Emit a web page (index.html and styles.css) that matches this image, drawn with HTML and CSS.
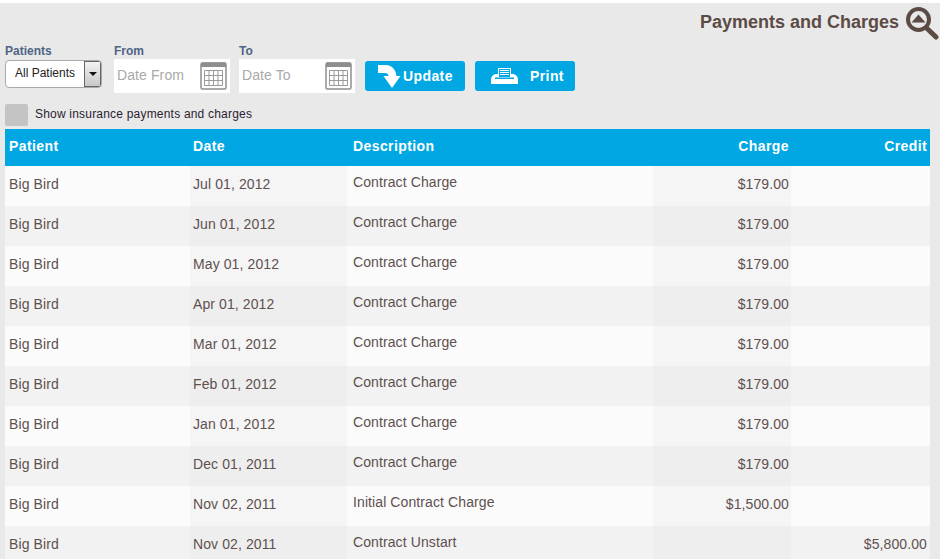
FILE: index.html
```html
<!DOCTYPE html>
<html lang="en">
<head>
<meta charset="utf-8">
<title>Payments and Charges</title>
<link rel="stylesheet" href="styles.css">
</head>
<body>
<main class="panel">
  <header class="title-row">
    <h1 class="title">Payments and Charges</h1>
    <svg class="search-icon" width="34" height="34" viewBox="0 0 34 34" aria-hidden="true">
      <circle cx="13.5" cy="13.5" r="10.5" fill="none" stroke="#5b4b44" stroke-width="4"/>
      <path d="M21.5 22 L31 31" stroke="#5b4b44" stroke-width="5" stroke-linecap="round"/>
      <path d="M6.5 16.5 L13.5 8.500 L20.5 16.5 Z" fill="#5b4b44"/>
    </svg>
  </header>

  <form class="filters">
    <div class="field field-patients">
      <label class="field-label">Patients</label>
      <div class="select">
        <span class="select-value">All Patients</span>
        <span class="select-arrow"><i class="caret"></i></span>
      </div>
    </div>
    <div class="field">
      <label class="field-label">From</label>
      <div class="date-input">
        <span class="placeholder">Date From</span>
        <svg class="calendar" width="27" height="28" viewBox="0 0 27 28" aria-hidden="true">
          <rect x="1" y="1" width="25" height="26" rx="1.5" fill="#fff" stroke="#8e8e8e" stroke-width="1.5"/>
          <path d="M1 1.5 a1 1 0 0 1 1-1 h23 a1 1 0 0 1 1 1 V5 H1 Z" fill="#8e8e8e"/>
          <path d="M4.5 8.5 H22.5 V23.5 H4.5 Z M4.5 13.5 H22.5 M4.5 18.5 H22.5 M9 8.5 V23.5 M13.5 8.5 V23.5 M18 8.5 V23.5" fill="none" stroke="#9a9a9a"/>
        </svg>
      </div>
    </div>
    <div class="field">
      <label class="field-label">To</label>
      <div class="date-input">
        <span class="placeholder">Date To</span>
        <svg class="calendar" width="27" height="28" viewBox="0 0 27 28" aria-hidden="true">
          <rect x="1" y="1" width="25" height="26" rx="1.5" fill="#fff" stroke="#8e8e8e" stroke-width="1.5"/>
          <path d="M1 1.5 a1 1 0 0 1 1-1 h23 a1 1 0 0 1 1 1 V5 H1 Z" fill="#8e8e8e"/>
          <path d="M4.5 8.5 H22.5 V23.5 H4.5 Z M4.5 13.5 H22.5 M4.5 18.5 H22.5 M9 8.5 V23.5 M13.5 8.5 V23.5 M18 8.5 V23.5" fill="none" stroke="#9a9a9a"/>
        </svg>
      </div>
    </div>
    <button class="btn btn-update" type="button">
      <svg width="23" height="23" viewBox="0 0 23 23" aria-hidden="true">
        <path d="M0 0 H8 C14 0 18 5 18.500 11 H22.500 L14 23 L5.500 11 H10.500 C10.500 9 9 8 7 8 H0 Z" fill="#fff"/>
      </svg>
      <span>Update</span>
    </button>
    <button class="btn btn-print" type="button">
      <svg width="27" height="16" viewBox="0 0 27 16" aria-hidden="true">
        <path d="M0 16 V11.500 C0 8.500 2 7 4.500 6 H22.500 C25 7 27 8.500 27 11.500 V16 Z" fill="#fff"/>
        <rect x="7.500" y="0.500" width="12" height="9" fill="#00a7e3" stroke="#fff"/>
        <path d="M9 2.500 H18 M9 4.500 H18 M9 6.500 H18" stroke="#fff"/>
        <rect x="4" y="9.500" width="19" height="1.500" fill="#00a7e3"/>
      </svg>
      <span>Print</span>
    </button>
  </form>

  <div class="insurance">
    <span class="checkbox"></span>
    <span class="insurance-label">Show insurance payments and charges</span>
  </div>

  <table class="ledger">
    <colgroup>
      <col class="col-patient"><col class="col-date"><col class="col-desc"><col class="col-charge"><col class="col-credit">
    </colgroup>
    <thead>
      <tr><th>Patient</th><th>Date</th><th>Description</th><th class="num">Charge</th><th class="num">Credit</th></tr>
    </thead>
    <tbody>
      <tr><td>Big Bird</td><td class="shade">Jul 01, 2012</td><td class="desc">Contract Charge</td><td class="num shade">$179.00</td><td class="num"></td></tr>
      <tr><td>Big Bird</td><td class="shade">Jun 01, 2012</td><td class="desc">Contract Charge</td><td class="num shade">$179.00</td><td class="num"></td></tr>
      <tr><td>Big Bird</td><td class="shade">May 01, 2012</td><td class="desc">Contract Charge</td><td class="num shade">$179.00</td><td class="num"></td></tr>
      <tr><td>Big Bird</td><td class="shade">Apr 01, 2012</td><td class="desc">Contract Charge</td><td class="num shade">$179.00</td><td class="num"></td></tr>
      <tr><td>Big Bird</td><td class="shade">Mar 01, 2012</td><td class="desc">Contract Charge</td><td class="num shade">$179.00</td><td class="num"></td></tr>
      <tr><td>Big Bird</td><td class="shade">Feb 01, 2012</td><td class="desc">Contract Charge</td><td class="num shade">$179.00</td><td class="num"></td></tr>
      <tr><td>Big Bird</td><td class="shade">Jan 01, 2012</td><td class="desc">Contract Charge</td><td class="num shade">$179.00</td><td class="num"></td></tr>
      <tr><td>Big Bird</td><td class="shade">Dec 01, 2011</td><td class="desc">Contract Charge</td><td class="num shade">$179.00</td><td class="num"></td></tr>
      <tr><td>Big Bird</td><td class="shade">Nov 02, 2011</td><td class="desc">Initial Contract Charge</td><td class="num shade">$1,500.00</td><td class="num"></td></tr>
      <tr><td>Big Bird</td><td class="shade">Nov 02, 2011</td><td class="desc">Contract Unstart</td><td class="num shade"></td><td class="num">$5,800.00</td></tr>
    </tbody>
  </table>
</main>
</body>
</html>
```

FILE: styles.css
```css
* { box-sizing: border-box; }
html, body { margin: 0; height: 100%; overflow: hidden; background: #fff; }
body { font-family: "Liberation Sans", Arial, sans-serif; color: #5b4b44; }

.panel {
  width: 940px;
  height: 556px;
  margin-top: 3px;
  padding: 0 0 0 5px;
  background: #e9e9e9;
  overflow: hidden;
}

.title-row {
  display: flex;
  justify-content: flex-end;
  align-items: flex-start;
  gap: 6px;
  height: 41px;
  padding-top: 3px;
  padding-right: 1px;
}
.title {
  margin: 6px 0 0;
  font-size: 18px;
  line-height: 21px;
  font-weight: 700;
  color: #5b4b44;
}

.filters { display: flex; align-items: flex-start; height: 60px; }
.field { margin-right: 9px; }
.field-patients { margin-right: 12px; }
.field-label {
  display: block;
  height: 15px;
  font-size: 12px;
  line-height: 14px;
  font-weight: 700;
  color: #4f6484;
}

.select {
  display: flex;
  width: 97px;
  height: 28px;
  margin-top: 1px;
  background: #fff;
  border: 1px solid #a9a9a9;
  border-radius: 4px;
  overflow: hidden;
}
.select-value {
  flex: 1;
  padding-left: 9px;
  font-size: 12px;
  line-height: 25px;
  color: #222;
}
.select-arrow {
  display: flex;
  align-items: center;
  justify-content: center;
  width: 17px;
  background: linear-gradient(#f2f2f2, #c8c8c8);
  border: 1px solid #666;
}
.caret {
  width: 0;
  height: 0;
  border: 4px solid transparent;
  border-top-color: #111;
  border-bottom: 0;
}

.date-input {
  display: flex;
  align-items: center;
  justify-content: space-between;
  width: 116px;
  height: 34px;
  padding: 0 3px;
  background: #fff;
}
.placeholder {
  margin-bottom: 2px;
  font-size: 14px;
  letter-spacing: .1px;
  color: #a9a9a9;
}

.btn {
  display: flex;
  align-items: center;
  height: 30px;
  width: 100px;
  margin: 17px 10px 0 1px;
  padding: 0;
  border: 0;
  border-radius: 3px;
  background: #00a7e3;
  color: #fff;
  font: 700 14px "Liberation Sans", Arial, sans-serif;
  letter-spacing: .4px;
}
.btn-update { padding-left: 13px; gap: 2px; }
.btn-print { margin-left: 0; padding-left: 16px; gap: 12px; }

.insurance {
  display: flex;
  align-items: center;
  gap: 7px;
  height: 22px;
  margin-bottom: 3px;
}
.checkbox {
  width: 23px;
  height: 22px;
  background: #c4c4c4;
  border-radius: 2px;
}
.insurance-label {
  padding-bottom: 2px;
  font-size: 12px;
  letter-spacing: .2px;
  color: #2b2230;
}

.ledger {
  width: 925px;
  table-layout: fixed;
  border-collapse: collapse;
  font-size: 14px;
  letter-spacing: .1px;
}
.col-patient { width: 185px; }
.col-date { width: 157px; }
.col-desc { width: 306px; }
.col-charge { width: 138px; }
.col-credit { width: 139px; }

.ledger th {
  height: 37px;
  padding: 0 3px 4px 4px;
  text-align: left;
  background: #00a7e3;
  color: #fff;
  font-weight: 700;
  letter-spacing: .4px;
}
.ledger th:nth-child(2), .ledger td:nth-child(2) { padding-left: 3px; }
.ledger th:nth-child(3) { padding-left: 6px; }
.ledger td {
  height: 40px;
  padding: 0 3px 4px 4px;
  color: #5f5050;
}
.ledger tbody tr:nth-child(odd) { background: #fbfbfb; }
.ledger tbody tr:nth-child(even) { background: #f2f2f2; }
.ledger tbody tr:nth-child(odd) .shade { background: #f5f5f5; }
.ledger tbody tr:nth-child(even) .shade { background: #eeeeee; }
.ledger .desc { padding: 0 3px 8px 6px; }
.ledger .num { text-align: right; padding-left: 0; padding-right: 2px; }
.ledger td.num:last-child, .ledger th.num:last-child { padding-right: 3px; }
```
